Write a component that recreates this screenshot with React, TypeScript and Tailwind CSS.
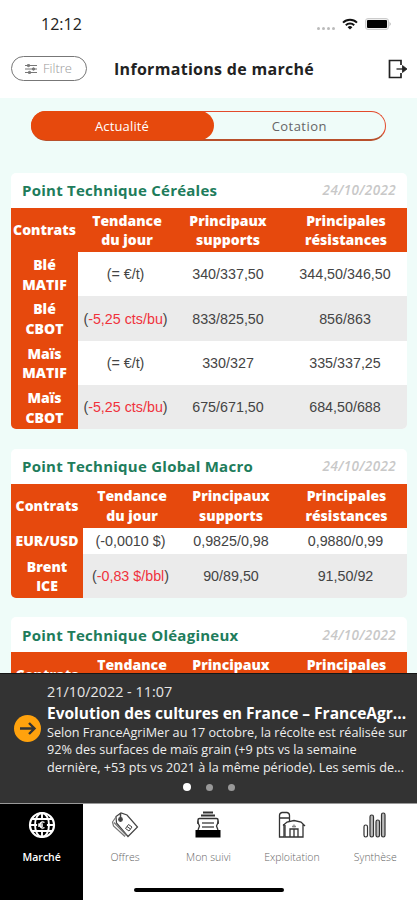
import React from 'react';

type Row = {
    contrat: string[];
    tendance: string;
    baisse?: boolean;
    supports: string;
    resistances: string;
};

type PointTechnique = {
    titre: string;
    date: string;
    cols: string;
    rows: Row[];
};

const points: PointTechnique[] = [
    {
        titre: 'Point Technique Céréales',
        date: '24/10/2022',
        cols: 'grid-cols-[67px_95px_110px_124px]',
        rows: [
            { contrat: ['Blé', 'MATIF'], tendance: '= €/t', supports: '340/337,50', resistances: '344,50/346,50' },
            { contrat: ['Blé', 'CBOT'], tendance: '-5,25 cts/bu', baisse: true, supports: '833/825,50', resistances: '856/863' },
            { contrat: ['Maïs', 'MATIF'], tendance: '= €/t', supports: '330/327', resistances: '335/337,25' },
            { contrat: ['Maïs', 'CBOT'], tendance: '-5,25 cts/bu', baisse: true, supports: '675/671,50', resistances: '684,50/688' },
        ],
    },
    {
        titre: 'Point Technique Global Macro',
        date: '24/10/2022',
        cols: 'grid-cols-[72px_95px_106px_123px]',
        rows: [
            { contrat: ['EUR/USD'], tendance: '-0,0010 $', supports: '0,9825/0,98', resistances: '0,9880/0,99' },
            { contrat: ['Brent', 'ICE'], tendance: '-0,83 $/bbl', baisse: true, supports: '90/89,50', resistances: '91,50/92' },
        ],
    },
    {
        titre: 'Point Technique Oléagineux',
        date: '24/10/2022',
        cols: 'grid-cols-[72px_95px_106px_123px]',
        rows: [],
    },
];

const StatusBar = () => (
    <div className="flex h-12 items-center pl-[41px] pr-[26px]">
        <span className="text-[16px] font-medium text-[#222]">12:12</span>
        <div className="ml-auto flex items-center gap-[7px]">
            <div className="mt-2 flex gap-[2px]">
                <i className="size-[3px] rounded-full bg-[#bbb]" />
                <i className="size-[3px] rounded-full bg-[#bbb]" />
                <i className="size-[3px] rounded-full bg-[#bbb]" />
                <i className="size-[3px] rounded-full bg-[#bbb]" />
            </div>
            <svg width="16" height="12" viewBox="0 0 16 12" fill="none" stroke="#111" strokeWidth="2">
                <path d="M1 4.6a10 10 0 0 1 14 0" />
                <path d="M3.8 7.3a6 6 0 0 1 8.4 0" />
                <path d="M8 11.6 5.6 9.3a3.4 3.4 0 0 1 4.8 0z" fill="#111" stroke="none" />
            </svg>
            <svg width="26" height="12" viewBox="0 0 26 12">
                <rect x="0.5" y="0.5" width="23" height="11" rx="2.5" fill="#eee" stroke="#ccc" />
                <path d="M24.5 3.5 26 6l-1.5 2.5z" fill="#bbb" />
                <rect x="2" y="2" width="20" height="8" rx="1" fill="#000" />
            </svg>
        </div>
    </div>
);

const Header = () => (
    <div className="flex h-[50px] items-start pl-[11px] pr-[9px] pt-2">
        <button className="flex h-[25px] w-[76px] items-center gap-[6px] rounded-full border border-[#777] pl-[13px]">
            <svg width="12" height="10" viewBox="0 0 12 10" stroke="#777" fill="#777">
                <path d="M0 1.5h12M0 5h12M0 8.5h12" strokeWidth="1" />
                <circle cx="3.5" cy="1.5" r="1.2" />
                <circle cx="8.5" cy="5" r="1.2" />
                <circle cx="4.5" cy="8.5" r="1.2" />
            </svg>
            <span className="text-[13px] font-light text-[#999]">Filtre</span>
        </button>
        <h1 className="ml-[27px] mt-[1px] whitespace-nowrap text-[16px] font-bold leading-6 tracking-[0.3px] text-[#222]">
            Informations de marché
        </h1>
        <svg className="ml-auto mt-[3px]" width="20" height="20" viewBox="0 0 20 20" fill="none" stroke="#222" strokeWidth="1.7">
            <path d="M13 6V1.5H1.5v17H13V14" />
            <path d="M8.5 10H16" stroke="#555" />
            <path d="M14.5 6.5 19 10l-4.5 3.5z" fill="#222" stroke="#222" strokeWidth="0.8" />
        </svg>
    </div>
);

const Onglets = () => (
    <div className="ml-[31px] flex h-[30px] w-[355px] rounded-full border-[1.5px] border-b-2 border-[#e34a2c] border-b-[#b8502c] text-[13px]">
        <button className="-my-[1px] -ml-[1.5px] flex w-[183px] items-center justify-center rounded-full bg-[#e6490d] pt-[2px] tracking-[0.15px] text-white">
            Actualité
        </button>
        <button className="flex flex-1 items-center justify-center pt-[2px] tracking-[0.45px] text-[#666]">Cotation</button>
    </div>
);

const CarteMarche = ({ point }: { point: PointTechnique }) => (
    <section className="overflow-hidden rounded-[5px] bg-white">
        <div className="flex h-[35px] items-center justify-between px-[11px]">
            <h2 className="whitespace-nowrap text-[15px] font-bold tracking-[0.25px] text-[#207c5b]">{point.titre}</h2>
            <span className="text-[13.5px] font-semibold italic tracking-[0.35px] text-[#c8c8c8]">{point.date}</span>
        </div>
        <div className={`grid h-11 items-center bg-[#e6490d] text-center text-[14px] font-extrabold leading-[19.5px] text-white ${point.cols}`}>
            <span>Contrats</span>
            <span className="pl-[3px]">Tendance<br />du jour</span>
            <span>Principaux<br />supports</span>
            <span className="pl-[2px]">Principales<br />résistances</span>
        </div>
        {point.rows.map((row, index) => (
            <div
                key={index}
                className={`grid items-center text-center font-['Liberation_Sans',sans-serif] text-[14.3px] text-[#444] ${point.cols} ${row.contrat.length > 1 ? 'h-[44.3px]' : 'h-[26px]'} ${index % 2 ? 'bg-[#ebebeb]' : 'bg-white'}`}
            >
                <div className="flex h-full flex-col justify-center bg-[#e6490d] pt-px font-['Open_Sans',sans-serif] text-[14px] font-extrabold leading-[19.5px] text-white">
                    {row.contrat.map((ligne) => <span key={ligne}>{ligne}</span>)}
                </div>
                <span className="whitespace-nowrap pt-[2px]">
                    (<span className={row.baisse ? 'text-[#f0323c]' : ''}>{row.tendance}</span>)
                </span>
                <span className="pt-[2px]">{row.supports}</span>
                <span className="pt-[2px]">{row.resistances}</span>
            </div>
        ))}
    </section>
);

const Actualite = () => (
    <section className="flex h-[130px] shrink-0 flex-col border-t border-[#161616] bg-[#333] text-white">
        <div className="flex items-center gap-[6px] pl-[14px] pt-2">
            <svg className="shrink-0" width="27" height="27" viewBox="0 0 27 27">
                <circle cx="13.5" cy="13.5" r="13.5" fill="#ffa20d" />
                <path d="M6 13.5h14M15 8l5.5 5.5L15 19" fill="none" stroke="#333" strokeWidth="2.4" />
            </svg>
            <div className="whitespace-nowrap">
                <p className="text-[14.4px] leading-5 text-[#e6e6e6]">21/10/2022 - 11:07</p>
                <p className="text-[15.5px] font-bold leading-[22px]">Evolution des cultures en France – FranceAgr...</p>
                <p className="text-[12.65px] leading-[17.3px] text-[#eee]">
                    Selon FranceAgriMer au 17 octobre, la récolte est réalisée sur<br />
                    92% des surfaces de maïs grain (+9 pts vs la semaine<br />
                    dernière, +53 pts vs 2021 à la même période). Les semis de...
                </p>
            </div>
        </div>
        <div className="mt-[7px] flex justify-center gap-[15px]">
            <i className="size-2 rounded-full bg-white" />
            <i className="mt-px size-[7px] rounded-full bg-[#999]" />
            <i className="mt-px size-[7px] rounded-full bg-[#999]" />
        </div>
    </section>
);

const IconMarche = () => (
    <svg width="28" height="28" viewBox="0 0 28 28" fill="none" stroke="#fff" strokeWidth="1.9">
        <circle cx="14" cy="14" r="12" strokeWidth="2.2" />
        <ellipse cx="14" cy="14" rx="7" ry="12" />
        <path d="M2 14h24M14 2v24M4 8h20M4 20h20" />
        <circle cx="14" cy="14" r="5" fill="#000" stroke="none" />
        <path d="M16.5 11.5a3 3 0 1 0 0 5M10 13.2h5M10 15h5" strokeWidth="1.3" />
    </svg>
);

const IconOffres = () => (
    <svg width="28" height="28" viewBox="0 0 28 28" fill="none" stroke="#444" strokeWidth="1.2">
        <path d="M5 5.5 10 2l6 2L26.5 16 17 25.500 5.500 12z" />
        <path d="M5 6 1.500 11l1 4L14 25.500M3 11.500l12.500 13" stroke="#777" />
        <circle cx="9.500" cy="8.500" r="1.800" fill="#444" />
        <path d="M9.500 8V2" strokeWidth="1.500" />
        <path d="m14.500 17.500 3-4 3.500 2.500-3 4zM16 15.500l3.500 2.500" strokeWidth="1" />
    </svg>
);

const IconSuivi = () => (
    <svg width="28" height="28" viewBox="0 0 28 28" fill="none" stroke="#333" strokeWidth="1.5">
        <path d="M9 1.500h10M7 4.500h14" strokeWidth="2" />
        <path d="M4 13V9q0-1.500 1.500-1.500h17q1.500 0 1.500 1.500v4" />
        <path d="M3.500 10.500 5.500 15 4 19M24.500 10.500 22.500 15l1.500 4" strokeWidth="1.3" />
        <path d="M8 12h12M8 16h12" stroke="#555" />
        <rect x="1.5" y="19" width="25" height="7.5" fill="#000" stroke="none" />
    </svg>
);

const IconExploitation = () => (
    <svg width="28" height="28" viewBox="0 0 28 28" fill="none" stroke="#333" strokeWidth="1.3">
        <path d="M6 13v13H1.5V4.500Q1.500 2 4 1.500h5q2.500.5 2.500 3V10M1.500 7h10" />
        <path d="m5 14.500 4-3.500 7-1.500L23 11l4 4M7 14v12h18V13" />
        <path d="M12 26v-8h8v8M16 18v8" />
        <path d="M14 15.500h4M16 13.500v3" stroke="#888" />
    </svg>
);

const IconSynthese = () => (
    <svg width="28" height="28" viewBox="0 0 28 28" fill="#bbb" stroke="#333" strokeWidth="1.2">
        <rect x="3" y="14" width="3.5" height="12" rx="1.7" fill="#fff" />
        <rect x="9" y="4" width="3.5" height="22" rx="1.7" />
        <rect x="15" y="9" width="3.5" height="17" rx="1.7" />
        <rect x="20.5" y="2" width="3.5" height="24" rx="1.7" />
    </svg>
);

const menu = [
    { label: 'Marché', icon: <IconMarche /> },
    { label: 'Offres', icon: <IconOffres /> },
    { label: 'Mon suivi', icon: <IconSuivi /> },
    { label: 'Exploitation', icon: <IconExploitation /> },
    { label: 'Synthèse', icon: <IconSynthese /> },
];

const MenuBas = () => (
    <nav className="relative grid h-[97px] shrink-0 grid-cols-5 border-t border-[#999] bg-white">
        {menu.map((item, index) => (
            <button
                key={item.label}
                className={`flex flex-col items-center pt-[7px] text-[10.5px] ${index === 0 ? 'bg-black font-semibold text-white' : 'font-light text-[#666]'}`}
            >
                {item.icon}
                <span className="mt-[11px] whitespace-nowrap">{item.label}</span>
            </button>
        ))}
        <div className="absolute bottom-2 left-[134px] h-1 w-[150px] rounded-full bg-black" />
    </nav>
);

const App = () => {
    return (
        <div className="flex h-[900px] w-[417px] flex-col overflow-hidden bg-[#effcf9] font-['Open_Sans',sans-serif]">
            <header className="shrink-0 bg-white">
                <StatusBar />
                <Header />
            </header>
            <main className="min-h-0 flex-1 overflow-hidden pt-[13px]">
                <Onglets />
                <div className="ml-[11px] mt-8 flex w-[396px] flex-col gap-[19.5px]">
                    {points.map((point) => <CarteMarche key={point.titre} point={point} />)}
                </div>
            </main>
            <Actualite />
            <MenuBas />
        </div>
    );
};

export default App;
